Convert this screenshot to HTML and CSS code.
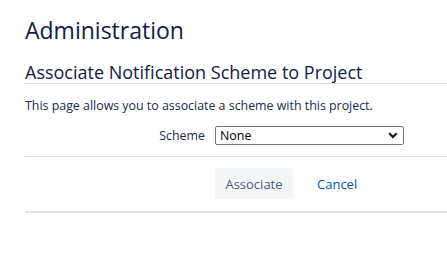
FILE: index.html
```html
<!DOCTYPE html>
<html>
<head>
<meta charset="utf-8">
<link rel="stylesheet" href="styles.css">
</head>
<body>
<div class="page">
  <h1 class="title">Administration</h1>
  <form class="form">
    <h2 class="form-title">Associate Notification Scheme to Project</h2>
    <p class="desc">This page allows you to associate a scheme with this project.</p>
    <div class="field">
      <label class="label" for="scheme">Scheme</label>
      <div class="select-wrap">
        <select id="scheme" class="select"><option>None</option></select>
        <svg class="chev" width="10" height="7" viewBox="0 0 10 7"><path d="M1.2 1.2 L5 5 L8.8 1.2" fill="none" stroke="#111" stroke-width="2"/></svg>
      </div>
    </div>
    <div class="buttons">
      <button type="button" class="btn" disabled>Associate</button>
      <a class="link" href="#">Cancel</a>
    </div>
  </form>
</div>
</body>
</html>
```
FILE: styles.css
```css
html, body { margin: 0; padding: 0; background: #fff; }
body { font-family: "Open Sans", "Noto Sans", sans-serif; color: #172b4d; }
.page { padding: 12px 0 0 25px; }
.title { font-size: 23px; font-weight: 400; margin: 0; line-height: 36px; color: #0f2146; }
.form { margin-top: 14px; }
.form-title { font-size: 18px; font-weight: 400; margin: 0; line-height: 21px; padding-bottom: 0; border-bottom: 1px solid #dfe1e6; color: #0f2146; }
.desc { font-size: 12.4px; margin: 0; padding-top: 13px; line-height: 18px; color: #172b4d; }
.field { display: grid; grid-template-columns: 180px 189px; column-gap: 10px; align-items: center; padding: 11px 0 11px; border-bottom: 1px solid #dfe1e6; }
.label { text-align: right; font-size: 12.4px; color: #172b4d; }
.select-wrap { position: relative; }
.select { -webkit-appearance: none; appearance: none; width: 100%; height: 19px; box-sizing: border-box; border: 1px solid #767676; border-radius: 2px; background: #fff; font-family: inherit; font-size: 12.4px; color: #000; padding: 0 0 0 4px; margin: 0; line-height: 17px; display: block; }
.chev { position: absolute; right: 6px; top: 6px; pointer-events: none; }
.buttons { display: flex; align-items: center; padding: 11px 0 12px 190px; border-bottom: 2px solid #dfe1e6; }
.btn { font-family: inherit; font-size: 13px; background: #f4f5f7; color: #505f79; border: none; border-radius: 3px; height: 31px; width: 78px; padding: 0; }
.link { font-size: 13px; color: #0052cc; text-decoration: none; margin-left: 24px; }
```
